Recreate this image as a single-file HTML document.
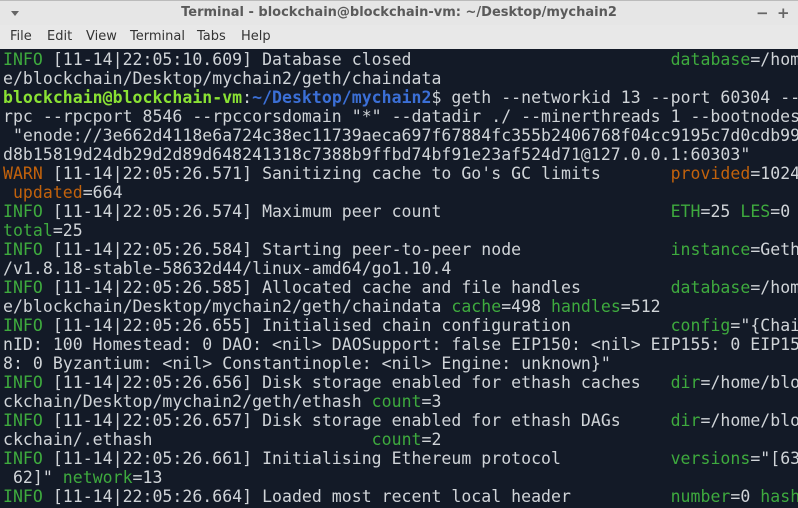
<!DOCTYPE html>
<html><head><meta charset="utf-8"><style>
body{margin:0;width:798px;height:508px;overflow:hidden;background:#e8e8e8;font-family:"DejaVu Sans","Liberation Sans",sans-serif}
.title{position:absolute;left:0;top:0;width:798px;height:25px;background:#e6e6e6;border-top:1px solid #bbb;box-sizing:border-box}
.title .t{position:absolute;left:0;width:798px;text-align:center;top:4px;font-size:13px;font-weight:bold;color:#5a5a5a}
.title .arr{position:absolute;left:11px;top:10px;width:0;height:0;border-left:4px solid transparent;border-right:4px solid transparent;border-top:5px solid #666}
.title .btn{position:absolute;top:3px;font-size:15px;color:#666;font-weight:bold}
.menu{position:absolute;left:0;top:25px;width:798px;height:24px;background:#e8e8e8;font-size:13px;color:#333}
.menu span{position:absolute;top:4px}
.term{position:absolute;left:0;top:49px;width:798px;height:459px;background:#131a27;overflow:hidden}
pre{margin:0;padding:1px 0 0 3px;font-family:"DejaVu Sans Mono","Liberation Mono",monospace;font-size:16.5px;letter-spacing:0.03px;line-height:19px;color:#d0d4d8;white-space:pre}
.g{color:#3eaa3e}.o{color:#c2620c}.pg{color:#8ae234;font-weight:bold}.pb{color:#3b6fd6;font-weight:bold}
</style></head><body>
<div class="title"><div class="arr"></div><div class="t">Terminal - blockchain@blockchain-vm: ~/Desktop/mychain2</div><span class="btn" style="left:756px">−</span><span class="btn" style="left:777px">+</span></div>
<div class="menu"><span style="left:10px">File</span><span style="left:47px">Edit</span><span style="left:86px">View</span><span style="left:130px">Terminal</span><span style="left:197px">Tabs</span><span style="left:241px">Help</span></div>
<div class="term"><pre><span class="g">INFO</span> [11-14|22:05:10.609] Database closed                          <span class="g">database</span>=/home/blockchain
e/blockchain/Desktop/mychain2/geth/chaindata
<span class="pg">blockchain@blockchain-vm</span>:<span class="pb">~/Desktop/mychain2</span>$ geth --networkid 13 --port 60304 --rpc
rpc --rpcport 8546 --rpccorsdomain "*" --datadir ./ --minerthreads 1 --bootnodes
 "enode://3e662d4118e6a724c38ec11739aeca697f67884fc355b2406768f04cc9195c7d0cdb99
d8b15819d24db29d2d89d648241318c7388b9ffbd74bf91e23af524d71@127.0.0.1:60303"
<span class="o">WARN</span> [11-14|22:05:26.571] Sanitizing cache to Go's GC limits       <span class="o">provided</span>=1024
 <span class="o">updated</span>=664
<span class="g">INFO</span> [11-14|22:05:26.574] Maximum peer count                       <span class="g">ETH</span>=25 <span class="g">LES</span>=0
<span class="g">total</span>=25
<span class="g">INFO</span> [11-14|22:05:26.584] Starting peer-to-peer node               <span class="g">instance</span>=Geth
/v1.8.18-stable-58632d44/linux-amd64/go1.10.4
<span class="g">INFO</span> [11-14|22:05:26.585] Allocated cache and file handles         <span class="g">database</span>=/home
e/blockchain/Desktop/mychain2/geth/chaindata <span class="g">cache</span>=498 <span class="g">handles</span>=512
<span class="g">INFO</span> [11-14|22:05:26.655] Initialised chain configuration          <span class="g">config</span>="{Chai
nID: 100 Homestead: 0 DAO: &lt;nil&gt; DAOSupport: false EIP150: &lt;nil&gt; EIP155: 0 EIP15
8: 0 Byzantium: &lt;nil&gt; Constantinople: &lt;nil&gt; Engine: unknown}"
<span class="g">INFO</span> [11-14|22:05:26.656] Disk storage enabled for ethash caches   <span class="g">dir</span>=/home/blo
ckchain/Desktop/mychain2/geth/ethash <span class="g">count</span>=3
<span class="g">INFO</span> [11-14|22:05:26.657] Disk storage enabled for ethash DAGs     <span class="g">dir</span>=/home/blo
ckchain/.ethash                      <span class="g">count</span>=2
<span class="g">INFO</span> [11-14|22:05:26.661] Initialising Ethereum protocol           <span class="g">versions</span>="[63
 62]" <span class="g">network</span>=13
<span class="g">INFO</span> [11-14|22:05:26.664] Loaded most recent local header          <span class="g">number</span>=0 <span class="g">hash</span>
</pre></div>
</body></html>
